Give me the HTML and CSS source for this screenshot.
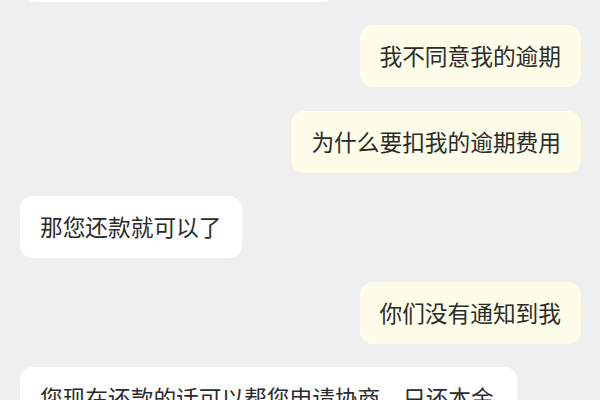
FILE: index.html
```html
<!DOCTYPE html>
<html lang="zh-CN">
<head>
    <meta charset="UTF-8">
    <meta name="viewport" content="width=device-width, initial-scale=1.0">
    <title>聊天记录</title>
    <link rel="stylesheet" href="styles.css">
</head>
<body>
    <div class="chat">
        <!-- earlier message, scrolled mostly out of view -->
        <div class="msg left first">请问还有什么可以帮您的吗</div>

        <div class="msg right">我不同意我的逾期</div>
        <div class="msg right">为什么要扣我的逾期费用</div>
        <div class="msg left">那您还款就可以了</div>
        <div class="msg right">你们没有通知到我</div>
        <div class="msg left">您现在还款的话可以帮您申请协商，只还本金就可以了，逾期费用可以帮您减免</div>
    </div>
</body>
</html>
```

FILE: styles.css
```css
body {
    margin: 0;
    background-color: #efefef;
    font-family: "Noto Sans CJK SC", "Noto Sans", sans-serif;
    overflow: hidden;
}
.chat {
    display: flex;
    flex-direction: column;
    gap: 23.5px;
    padding: 0 19px 0 20px;
    margin-top: -60.5px;
}
.msg {
    box-sizing: border-box;
    max-width: 497px;
    padding: 18px 20px;
    border-radius: 13px;
    font-size: 22.7px;
    line-height: 26px;
    color: #2b2b2b;
}
.first {
    margin-left: 3px;
}
.left {
    align-self: flex-start;
    background-color: #fff;
}
.right {
    align-self: flex-end;
    background-color: #fdfde9;
}
```
